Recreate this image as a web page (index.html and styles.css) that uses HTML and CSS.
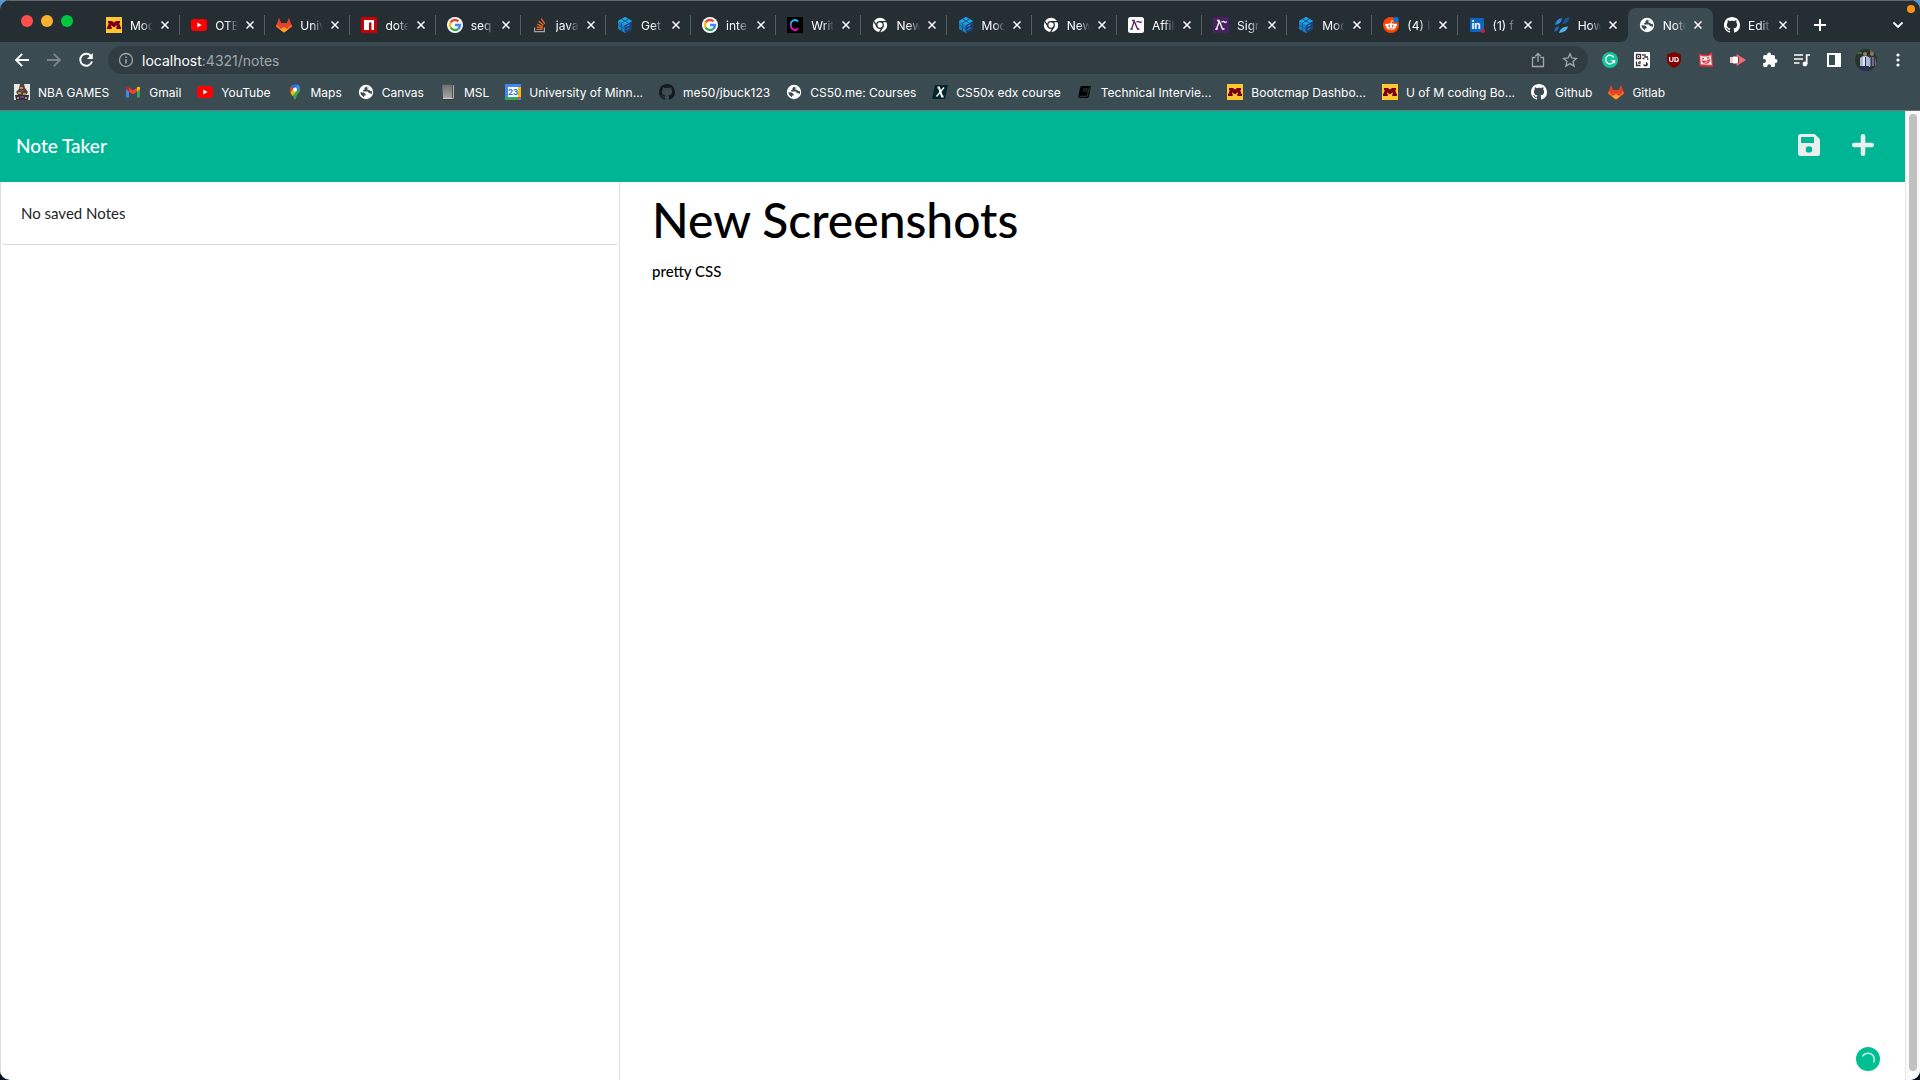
FILE: index.html
```html
<!DOCTYPE html>
<html lang="en">
<head>
<meta charset="utf-8">
<title>Note Taker</title>
<link rel="stylesheet" href="styles.css">
</head>
<body>
<svg class="sprite" aria-hidden="true">
  <symbol id="umn" viewBox="0 0 16 16"><path fill="#ffc72f" d="M0 0h16v16H0z"/><path fill="#7a0019" d="M2 4h4l2 1.500L10 4h4v2h-.8l1.200 3.800h.6V12h-4.700V9.800h.7l-.6-1.600L8.800 10H7.200L5.600 8.200 5 9.800h.7V12H1V9.800h.6L2.800 6H2z"/></symbol>
  <symbol id="youtube" viewBox="0 0 16 16"><rect y="2" width="16" height="12" rx="3" fill="#f00"/><path fill="#fff" d="M6.300 5.500v5L10.600 8z"/></symbol>
  <symbol id="gitlab" viewBox="0 0 16 16"><path fill="#e24329" d="M8 15.500 0 9.500 3 .8 5.200 6h5.600L13 .8l3 8.700z"/><path fill="#fc6d26" d="M8 15.500 0 9.500l.8-2.200L5.200 12zM8 15.500l8-6-.8-2.200L10.800 12z"/><path fill="#fca326" d="m8 15.500-4-3L8 10l4 2.500z"/></symbol>
  <symbol id="npm" viewBox="0 0 16 16"><path fill="#cb0000" d="M0 0h16v16H0z"/><path fill="#fff" d="M3 3h10v10h-2.500V5.500H8V13H3z"/></symbol>
  <symbol id="google" viewBox="0 0 16 16"><circle cx="8" cy="8" r="8" fill="#fff"/><g fill="none" stroke-width="2.400"><path stroke="#ea4335" d="M3.600 5.500A5 5 0 0 1 11.500 4.400"/><path stroke="#fbbc05" d="M3.600 5.500a5 5 0 0 0 0 5"/><path stroke="#34a853" d="M3.600 10.500a5 5 0 0 0 7.600 1.300"/><path stroke="#4285f4" d="M8 8h5a5 5 0 0 1-1.800 3.800"/></g></symbol>
  <symbol id="stack" viewBox="0 0 16 16"><path fill="none" stroke="#a5a8aa" stroke-width="1.200" d="M2.600 10.500v4.200h9.800v-4.200"/><path stroke="#f46a24" stroke-width="1.200" d="M4.500 12.400h6M4.700 9.800l5.900 1.100M5.300 7.100l5.500 2.600M6.800 4.300l4.700 3.900M9.200 1.600l3.600 5"/></symbol>
  <symbol id="sequelize" viewBox="0 0 16 16"><path fill="#1a86c9" d="m8 0 7 4v8l-7 4-7-4V4z"/><path fill="#1b3f78" d="m15 4-7 4v8l7-4z"/><path fill="#1fa3e3" d="m8 0 7 4-7 4-7-4z"/><path fill="none" stroke="#15568f" d="m4.500 2 7 4v3M11.500 2l-7 4v8M1 8l7 4M8 8v7"/><path stroke="#2b9ad9" d="m9.500 9.500 3-1.700M9.500 12.500l3-1.700"/></symbol>
  <symbol id="codecademy" viewBox="0 0 16 16"><linearGradient id="cg" x2="0" y2="1"><stop offset=".15" stop-color="#13c7f5"/><stop offset=".5" stop-color="#7a50e8"/><stop offset=".8" stop-color="#f509c0"/></linearGradient><path d="M0 0h16v16H0z"/><path fill="none" stroke="url(#cg)" stroke-width="1.800" d="M11 4.600A4 4 0 0 0 4 8a4 4 0 0 0 7 3.400"/></symbol>
  <symbol id="chrome" viewBox="0 0 16 16"><circle cx="8" cy="8" r="7.200" fill="#fff"/><g fill="none" stroke="#252f33" stroke-width="1.300"><circle cx="8" cy="8" r="3.300"/><path d="M8 4.700h7M5.200 9.700 2 4.500M10.800 9.700l-3.600 6.200"/></g></symbol>
  <symbol id="lambda" viewBox="0 0 16 16"><rect width="16" height="16" rx="2.500" fill="#fff"/><path fill="none" stroke="#4b2263" stroke-width="1.300" d="M4 3.500h2L9.500 12h2M6.200 4.500 3.500 12M2.200 12.200h2.600M8.500 5.200q1.500-1.400 3-.2t2-.6"/></symbol>
  <symbol id="lambda-dark" viewBox="0 0 16 16"><rect width="16" height="16" rx="1" fill="#4b2062"/><path fill="none" stroke="#fff" stroke-width="1.300" d="M4 3.500h2L9.500 12h2M6.200 4.500 3.500 12M2.200 12.200h2.600M8.500 5.200q1.500-1.400 3-.2t2-.6"/></symbol>
  <symbol id="reddit" viewBox="0 0 16 16"><circle cx="8" cy="8" r="8" fill="#ff4500"/><ellipse cx="8" cy="9.500" rx="4.800" ry="3.300" fill="#fff"/><circle cx="3.300" cy="8" r="1.300" fill="#fff"/><circle cx="12.700" cy="8" r="1.300" fill="#fff"/><path fill="none" stroke="#fff" stroke-width=".8" d="M8 6.500 8.700 3.600l2.500.6"/><circle cx="6.200" cy="9" r=".9" fill="#ff4500"/><circle cx="9.800" cy="9" r=".9" fill="#ff4500"/><path fill="none" stroke="#ff4500" stroke-width=".7" d="M6 11.200q2 1.200 4 0"/><circle cx="13" cy="2.800" r="2.800" fill="#0872d3"/></symbol>
  <symbol id="linkedin" viewBox="0 0 16 16"><rect x="1" y="1" width="14" height="14" rx="1" fill="#0a66c2"/><text x="2.500" y="12" fill="#fff" font-family="Lato, sans-serif" font-size="11" font-weight="900">in</text><circle cx="14" cy="14" r="2" fill="#e0182d"/></symbol>
  <symbol id="digital" viewBox="0 0 16 16"><path fill="#2d8be0" d="M8 1Q7.500 7 1 8q1-6 7-7z"/><path fill="#1c55a0" d="M15.500 0Q15 6 9 7q0-6 6.500-7z"/><path fill="#1f69b8" d="M5 9q0 4.500-4.500 6Q0 10 5 9z"/><path fill="#54b0e8" d="M14 9.500Q13 15 5 16q1-6 9-6.500z"/></symbol>
  <symbol id="globe" viewBox="0 0 16 16"><circle cx="8" cy="8" r="7.200" fill="#fff"/><path fill="#3b4b52" d="M8.500 2.300 6.500 4v1.600L5 6.300l.4 1.300h4.400l1.300 1.600h1.700l.5 1.300q1-1.500.8-3.200l-1.800-.2-1.500-1.300-1.600-.3.300-1.200 2-.3q-1.400-.7-3-.4zM2.200 8.200l3.600.4 1.900 1.500v1.300H6.300l-.4 1.900q-3-1.300-3.700-5.100z"/></symbol>
  <symbol id="github" viewBox="0 0 16 16"><path fill="currentColor" d="M8 0C3.580 0 0 3.580 0 8c0 3.540 2.290 6.530 5.470 7.590.4.070.55-.17.55-.38 0-.19-.01-.82-.01-1.490-2.010.37-2.530-.49-2.690-.94-.09-.23-.48-.94-.82-1.130-.28-.15-.68-.52-.01-.53.63-.01 1.080.58 1.230.82.72 1.210 1.870.87 2.330.66.07-.52.28-.87.51-1.070-1.780-.2-3.640-.89-3.640-3.950 0-.87.31-1.590.82-2.150-.08-.2-.36-1.020.08-2.120 0 0 .67-.21 2.200.82.64-.18 1.320-.27 2-.27s1.360.09 2 .27c1.530-1.040 2.200-.82 2.200-.82.44 1.100.16 1.920.08 2.120.51.56.82 1.270.82 2.150 0 3.070-1.870 3.750-3.650 3.950.29.25.54.73.54 1.480 0 1.070-.01 1.930-.01 2.200 0 .21.15.46.55.38A8 8 0 0 0 16 8c0-4.420-3.580-8-8-8z"/></symbol>
  <symbol id="nba" viewBox="0 0 16 16"><path fill="#e8e8e8" d="M0 0h16v16H0z"/><path fill="#51443d" d="M6 0h4l1 4 3 4-2 3H4L2 8l3-3z"/><path fill="#26324a" d="M1 11h14l-1 5H2z"/><path fill="#c98d34" d="M6 3h3v2H6zM4 8h3v2H4zM9 9h3v2H9zM3 13h2v2H3zM11 13h2v2h-2z"/><path fill="#7b3c72" d="M7 6h3v2H7zM6 12h4v2H6z"/></symbol>
  <symbol id="gmail" viewBox="0 0 16 16"><path fill="#4285f4" d="M1 4v9.500h3V6z"/><path fill="#34a853" d="M12 6v7.500h3V4z"/><path fill="#ea4335" d="M4 3.500 8 6.600l4-3.100v4L8 10.500l-4-3z"/><path fill="#c5221f" d="M1 4c0-1.500 2-1.500 3-.5v4L1 5.300z"/><path fill="#fbbc04" d="M15 4c0-1.500-2-1.500-3-.5v4l3-2.200z"/></symbol>
  <symbol id="maps" viewBox="0 0 16 16"><path fill="#34a853" d="M13.200 4c1.100 4-3.600 5.800-4.500 11-.2 1-1.200 1-1.400 0-.4-1.600-1-3-2-4.200z"/><path fill="#fbbc04" d="m3.400 8 3-3.500L10 7l-4.700 5Q4 10 3.400 8z"/><path fill="#4285f4" d="m6.500 4.500 3.800-4q2.100.8 2.900 3L10 7z"/><path fill="#ea4335" d="M3.900 2.200 6.600 4.500 3.400 8Q2 5 3.900 2.200z"/><path fill="#1a73e8" d="M3.900 2.200Q6-.7 10.300.5L6.600 4.500z"/><circle cx="8" cy="5.500" r="2" fill="#fff"/></symbol>
  <symbol id="msl" viewBox="0 0 16 16"><linearGradient id="mg" x2="0" y2="1"><stop stop-color="#6e6e6e"/><stop offset="1" stop-color="#a4a4a4"/></linearGradient><path fill="#2e2e2e" d="M1.500.5H14v15H3z"/><path fill="url(#mg)" d="M2 .5h10V14H3z"/><path fill="#ccc" d="M12.800 1h1v14l-1-1zM3 14h9.500l1 1H3z"/></symbol>
  <symbol id="calendar" viewBox="0 0 16 16"><path fill="#4285f4" d="M0 0h16v16H0z"/><path fill="#fbbc04" d="M13 3h3v10h-3z"/><path fill="#34a853" d="M0 13h13v3H0z"/><path fill="#ea4335" d="M13 13h3l-3 3z"/><path fill="#fff" d="M3 3h10v10H3z"/><text x="8" y="10.800" text-anchor="middle" fill="#1a73e8" font-family="Inter, sans-serif" font-size="8" font-weight="700">23</text></symbol>
  <symbol id="edx" viewBox="0 0 16 16"><path fill="#03262b" d="M3 1h13l-3 14H0z"/><path fill="none" stroke="#fff" stroke-width="2" d="M5.500 3.500h1.500L10 12.500h1.500"/><path stroke="#fff" stroke-width="1.300" d="m12 3.500-7.500 9"/></symbol>
  <symbol id="book" viewBox="0 0 16 16"><path d="M5 2h8q1 0 .7 1.200L12 12q-.3 2-2 2H3q-2 0-1.500-2L3 4q.5-2 2-2z"/><path fill="none" stroke="#4f5a5e" stroke-width=".7" d="M6 5h5M5.600 7h5M3 12.300h7l2.600-9"/></symbol>
  <symbol id="back" viewBox="0 0 16 16"><path fill="none" stroke="currentColor" stroke-width="1.800" d="M15 8H2.500M8.200 1.800 2 8l6.200 6.200"/></symbol>
  <symbol id="reload" viewBox="0 0 16 16"><path fill="none" stroke="currentColor" stroke-width="1.900" d="M13.200 4.300A6 6 0 1 0 14 9.500"/><path fill="currentColor" d="M14.800 1v6H8.900z"/></symbol>
  <symbol id="info" viewBox="0 0 16 16"><circle cx="8" cy="8" r="6.500" fill="none" stroke="currentColor" stroke-width="1.300"/><path stroke="currentColor" stroke-width="1.600" d="M8 7.200v4.200M8 4.500v1.600"/></symbol>
  <symbol id="share" viewBox="0 0 16 16"><path fill="none" stroke="currentColor" stroke-width="1.300" d="M5.500 5.500h-3v9h11v-9h-3M8 10V1.500M5.300 4.200 8 1.500l2.700 2.700"/></symbol>
  <symbol id="star" viewBox="0 0 16 16"><path fill="none" stroke="currentColor" stroke-width="1.300" d="m8 1.800 1.800 4.200 4.700.4L11 9.500l1.100 4.600L8 11.600l-4.100 2.500L5 9.500 1.500 6.400 6.200 6z"/></symbol>
  <symbol id="grammarly" viewBox="0 0 16 16"><circle cx="8" cy="8" r="8" fill="#15c39a"/><path fill="none" stroke="#fff" stroke-width="1.300" d="M11.700 5.400A4.300 4.300 0 1 0 12 9M9.300 8.700h3.200v2.600"/></symbol>
  <symbol id="qr" viewBox="0 0 16 16"><rect width="16" height="16" rx="1" fill="#fff"/><g fill="none" stroke="#333" stroke-width="1.300"><path d="M2.500 2.500h4v4h-4zM2.500 9.500v4h4M4 11h2V9M9 2v2M11 2v3h3M8.500 6.500h2M13 7h1.500"/></g><path fill="#333" d="M4 4h1v1H4zM9 12.500a2.600 2.600 0 0 0 5 0q0-1.500-2-3v3z"/></symbol>
  <symbol id="ublock" viewBox="0 0 16 16"><path fill="#800000" d="m8 0 7 2.500v5c0 4-3 6.500-7 8.500-4-2-7-4.500-7-8.500v-5z"/><path fill="none" stroke="#fff" stroke-width="1.200" d="M3.600 5v3q0 1.500 1.700 1.500T7 8V5M9 5.500v4h1.300a2 2 0 0 0 0-4z"/></symbol>
  <symbol id="mask" viewBox="0 0 16 16"><path fill="#e62d3a" d="m1 1.500 4.500 1.300 5-.2L14 0l1 15-13.500-.8z"/><path fill="#f8ebeb" d="m2.300 3.500 3.200 1 5.200-.2L13 2.800l.7 10.200-11-.8z"/><path fill="none" stroke="#d8323d" stroke-width="1.200" d="m4 7 2-.6M9 6.200l2.500-.6M4.500 9q3.500 1 7-1-.5 3-3 3.200-2.800.3-4-2.200z"/></symbol>
  <symbol id="clip" viewBox="0 0 16 16"><path fill="#ffc9ca" d="M0 5h4v6H0z"/><path fill="#fff" d="M3 4.500h5v7H3z"/><path fill="#ff6670" d="M6.500 2 16 8l-9.500 6v-3H9V5H6.500z"/></symbol>
  <symbol id="puzzle" viewBox="0 0 16 16"><path fill="currentColor" d="M13.500 7H13V4.500Q13 3 11.500 3H9v-.7a1.900 1.900 0 0 0-3.800 0V3H2.700Q1.200 3 1.200 4.500v2.400H2a2 2 0 0 1 0 4h-.8v2.600q0 1.500 1.500 1.500h2.500v-.8a2 2 0 0 1 4 0v.8h2.300q1.500 0 1.500-1.500v-2.600h.5a1.950 1.950 0 0 0 0-3.900z"/></symbol>
  <symbol id="queue" viewBox="0 0 16 16"><path fill="none" stroke="currentColor" stroke-width="1.700" d="M0 3h9M0 7h9M0 11h5.500M12.700 12V3H16"/><circle cx="11" cy="12" r="2.400" fill="currentColor"/></symbol>
  <symbol id="panel" viewBox="0 0 16 16"><path fill="currentColor" d="M1 1h14v14H1zm2 2v10h6V3z" fill-rule="evenodd"/></symbol>
  <symbol id="avatar" viewBox="0 0 22 22"><clipPath id="ac"><circle cx="11" cy="11" r="11"/></clipPath><g clip-path="url(#ac)"><path fill="#26342b" d="M0 0h22v22H0z"/><path fill="#4e6b45" d="M2 3h5v2H2zM15 1h4v3h-4z"/><path fill="#a9b9d4" d="m5 9 3-2h4l3 2v9H5z"/><path fill="#e3e9f1" d="M8 8h3v9H8z"/><path fill="#243151" d="M10 8h1v9h-1zM5 17h9v5H5z"/><path fill="#7c6583" d="M15 8h5l2 9h-7z"/><path fill="#313b58" d="M16 8h1v10h-1zM19 8h1v10h-1z"/><circle cx="10" cy="5" r="2" fill="#9f7764"/><circle cx="17" cy="5" r="2" fill="#9a715c"/></g></symbol>
  <symbol id="menu" viewBox="0 0 16 16"><g fill="currentColor"><circle cx="8" cy="3" r="1.600"/><circle cx="8" cy="8" r="1.600"/><circle cx="8" cy="13" r="1.600"/></g></symbol>
  <symbol id="close" viewBox="0 0 8 8"><path stroke="currentColor" stroke-width="1.500" d="m.5.5 7 7m0-7-7 7"/></symbol>
  <symbol id="add" viewBox="0 0 12 12"><path stroke="currentColor" stroke-width="2" d="M6 0v12M0 6h12"/></symbol>
  <symbol id="chevron" viewBox="0 0 12 12"><path fill="none" stroke="currentColor" stroke-width="1.800" d="m1.500 3.500 4.500 4.500 4.500-4.500"/></symbol>
</svg>

<div class="window">
  <header class="browser">
    <div class="tab-strip">
      <div class="lights"><span class="light red"></span><span class="light amber"></span><span class="light green"></span></div>
      <nav class="tabs" aria-label="Open tabs">
        <div class="tab"><svg class="icon"><use href="#umn"/></svg><a class="tab-title" href="#">Mod</a><button class="close" aria-label="Close tab"><svg><use href="#close"/></svg></button></div>
        <div class="tab"><svg class="icon"><use href="#youtube"/></svg><a class="tab-title" href="#">OTB</a><button class="close" aria-label="Close tab"><svg><use href="#close"/></svg></button></div>
        <div class="tab"><svg class="icon"><use href="#gitlab"/></svg><a class="tab-title" href="#">Univ</a><button class="close" aria-label="Close tab"><svg><use href="#close"/></svg></button></div>
        <div class="tab"><svg class="icon"><use href="#npm"/></svg><a class="tab-title" href="#">dote</a><button class="close" aria-label="Close tab"><svg><use href="#close"/></svg></button></div>
        <div class="tab"><svg class="icon"><use href="#google"/></svg><a class="tab-title" href="#">seq</a><button class="close" aria-label="Close tab"><svg><use href="#close"/></svg></button></div>
        <div class="tab"><svg class="icon"><use href="#stack"/></svg><a class="tab-title" href="#">java</a><button class="close" aria-label="Close tab"><svg><use href="#close"/></svg></button></div>
        <div class="tab"><svg class="icon"><use href="#sequelize"/></svg><a class="tab-title" href="#">Get</a><button class="close" aria-label="Close tab"><svg><use href="#close"/></svg></button></div>
        <div class="tab"><svg class="icon"><use href="#google"/></svg><a class="tab-title" href="#">inte</a><button class="close" aria-label="Close tab"><svg><use href="#close"/></svg></button></div>
        <div class="tab"><svg class="icon"><use href="#codecademy"/></svg><a class="tab-title" href="#">Writ</a><button class="close" aria-label="Close tab"><svg><use href="#close"/></svg></button></div>
        <div class="tab"><svg class="icon"><use href="#chrome"/></svg><a class="tab-title" href="#">New</a><button class="close" aria-label="Close tab"><svg><use href="#close"/></svg></button></div>
        <div class="tab"><svg class="icon"><use href="#sequelize"/></svg><a class="tab-title" href="#">Mod</a><button class="close" aria-label="Close tab"><svg><use href="#close"/></svg></button></div>
        <div class="tab"><svg class="icon"><use href="#chrome"/></svg><a class="tab-title" href="#">New</a><button class="close" aria-label="Close tab"><svg><use href="#close"/></svg></button></div>
        <div class="tab"><svg class="icon"><use href="#lambda"/></svg><a class="tab-title" href="#">Affil</a><button class="close" aria-label="Close tab"><svg><use href="#close"/></svg></button></div>
        <div class="tab"><svg class="icon"><use href="#lambda-dark"/></svg><a class="tab-title" href="#">Sign</a><button class="close" aria-label="Close tab"><svg><use href="#close"/></svg></button></div>
        <div class="tab"><svg class="icon"><use href="#sequelize"/></svg><a class="tab-title" href="#">Mod</a><button class="close" aria-label="Close tab"><svg><use href="#close"/></svg></button></div>
        <div class="tab"><svg class="icon"><use href="#reddit"/></svg><a class="tab-title" href="#">(4) I</a><button class="close" aria-label="Close tab"><svg><use href="#close"/></svg></button></div>
        <div class="tab"><svg class="icon"><use href="#linkedin"/></svg><a class="tab-title" href="#">(1) f</a><button class="close" aria-label="Close tab"><svg><use href="#close"/></svg></button></div>
        <div class="tab before-active"><svg class="icon"><use href="#digital"/></svg><a class="tab-title" href="#">How</a><button class="close" aria-label="Close tab"><svg><use href="#close"/></svg></button></div>
        <div class="tab active"><svg class="icon"><use href="#globe"/></svg><a class="tab-title" href="#">Note</a><button class="close" aria-label="Close tab"><svg><use href="#close"/></svg></button></div>
        <div class="tab"><svg class="icon"><use href="#github"/></svg><a class="tab-title" href="#">Edit</a><button class="close" aria-label="Close tab"><svg><use href="#close"/></svg></button></div>
      </nav>
      <div class="strip-end">
        <button class="strip-button" aria-label="New tab"><svg><use href="#add"/></svg></button>
        <button class="strip-button" aria-label="Search tabs"><svg><use href="#chevron"/></svg></button>
      </div>
      <span class="recording"></span>
    </div>

    <div class="toolbar">
      <div class="tools">
        <button class="tool" aria-label="Back"><svg class="icon"><use href="#back"/></svg></button>
        <button class="tool forward" aria-label="Forward" disabled><svg class="icon"><use href="#back"/></svg></button>
        <button class="tool" aria-label="Reload"><svg class="icon"><use href="#reload"/></svg></button>
      </div>
      <div class="omnibox">
        <svg class="icon"><use href="#info"/></svg>
        <a class="address" href="#"><span class="host">localhost</span>:4321/notes</a>
        <button class="tool" aria-label="Share"><svg class="icon"><use href="#share"/></svg></button>
        <button class="tool" aria-label="Bookmark this page"><svg class="icon"><use href="#star"/></svg></button>
      </div>
      <div class="tools">
        <button class="tool" aria-label="Grammarly"><svg class="icon"><use href="#grammarly"/></svg></button>
        <button class="tool" aria-label="QR code"><svg class="icon"><use href="#qr"/></svg></button>
        <button class="tool" aria-label="uBlock"><svg class="icon"><use href="#ublock"/></svg></button>
        <button class="tool" aria-label="Mask"><svg class="icon"><use href="#mask"/></svg></button>
        <button class="tool" aria-label="Recorder"><svg class="icon"><use href="#clip"/></svg></button>
        <button class="tool" aria-label="Extensions"><svg class="icon"><use href="#puzzle"/></svg></button>
        <button class="tool" aria-label="Media"><svg class="icon"><use href="#queue"/></svg></button>
        <button class="tool" aria-label="Side panel"><svg class="icon"><use href="#panel"/></svg></button>
        <button class="tool" aria-label="Profile"><svg class="avatar"><use href="#avatar"/></svg></button>
        <button class="tool" aria-label="Menu"><svg class="icon"><use href="#menu"/></svg></button>
      </div>
    </div>

    <nav class="bookmarks" aria-label="Bookmarks">
      <a href="#"><svg class="icon"><use href="#nba"/></svg>NBA GAMES</a>
      <a href="#"><svg class="icon"><use href="#gmail"/></svg>Gmail</a>
      <a href="#"><svg class="icon"><use href="#youtube"/></svg>YouTube</a>
      <a href="#"><svg class="icon"><use href="#maps"/></svg>Maps</a>
      <a href="#"><svg class="icon"><use href="#globe"/></svg>Canvas</a>
      <a href="#"><svg class="icon"><use href="#msl"/></svg>MSL</a>
      <a href="#"><svg class="icon"><use href="#calendar"/></svg>University of Minn...</a>
      <a href="#"><svg class="icon dark"><use href="#github"/></svg>me50/jbuck123</a>
      <a href="#"><svg class="icon"><use href="#globe"/></svg>CS50.me: Courses</a>
      <a href="#"><svg class="icon"><use href="#edx"/></svg>CS50x edx course</a>
      <a href="#"><svg class="icon"><use href="#book"/></svg>Technical Intervie...</a>
      <a href="#"><svg class="icon"><use href="#umn"/></svg>Bootcmap Dashbo...</a>
      <a href="#"><svg class="icon"><use href="#umn"/></svg>U of M coding Bo...</a>
      <a href="#"><svg class="icon"><use href="#github"/></svg>Github</a>
      <a href="#"><svg class="icon"><use href="#gitlab"/></svg>Gitlab</a>
    </nav>
  </header>

  <div class="viewport">
    <div class="page">
      <nav class="navbar">
        <a class="brand" href="#">Note Taker</a>
        <div class="actions">
          <button class="action" aria-label="Save note"><svg viewBox="0 0 22 22"><path fill="currentColor" fill-rule="evenodd" d="M2.500 0h13.300q1 0 1.700.7l3.800 3.800q.7.700.7 1.700v13.300q0 2.500-2.500 2.500h-17Q0 22 0 19.500v-17Q0 0 2.500 0zM3 3v6h13V3zm8 9.200a3.200 3.200 0 1 0 0 6.400 3.200 3.200 0 0 0 0-6.400z"/></svg></button>
          <button class="action" aria-label="New note"><svg viewBox="0 0 22 22"><path stroke="currentColor" stroke-width="4.600" stroke-linecap="round" d="M11 2.300v17.400M2.300 11h17.400"/></svg></button>
        </div>
      </nav>
      <main class="content">
        <aside class="sidebar"><ul class="notes"><li class="note">No saved Notes</li></ul></aside>
        <section class="editor">
          <input class="note-title" type="text" aria-label="Note title" value="New Screenshots">
          <textarea class="note-text" aria-label="Note text" spellcheck="false">pretty CSS</textarea>
        </section>
      </main>
      <svg class="checker" viewBox="0 0 24 24"><circle cx="12" cy="12" r="12" fill="#00bf93"/><path fill="none" stroke="#d8f7ed" stroke-width="1.400" d="M6.500 9.500A6.300 6.300 0 0 1 17.600 15.500"/></svg>
    </div>
    <div class="scrollbar"><div class="thumb"></div></div>
  </div>
</div>
</body>
</html>
```
FILE: styles.css
```css
* {
  box-sizing: border-box;
}

body {
  margin: 0;
  background: linear-gradient(#5b96d0 20px, #04121f 20px);
}

button {
  padding: 0;
  border: 0;
  background: none;
  color: inherit;
}

a {
  color: inherit;
  text-decoration: none;
}

.sprite {
  position: absolute;
  width: 0;
  height: 0;
}

.icon {
  width: 16px;
  height: 16px;
  flex: none;
  display: block;
}

.dark {
  color: #15191b;
}

.window {
  height: 100vh;
  display: flex;
  flex-direction: column;
  border-radius: 10px;
  overflow: hidden;
}

/* Browser chrome */

.browser {
  flex: none;
  background: #3b4b52;
  border-bottom: 1px solid #6c767b;
  color: #fff;
  font-family: Inter, "Liberation Sans", sans-serif;
  font-size: 12px;
}

.tab-strip {
  position: relative;
  display: flex;
  height: 42px;
  background: #252f33;
  border-top: 1px solid #626c70;
}

.lights {
  display: flex;
  flex: none;
  width: 95px;
  align-items: center;
  gap: 8px;
  padding: 0 0 2px 21px;
}

.light {
  width: 12px;
  height: 12px;
  border-radius: 50%;
}

.red {
  background: #ff4e4e;
}

.amber {
  background: #ffb02e;
}

.green {
  background: #00c73c;
}

.tabs {
  display: flex;
  flex: 1;
  min-width: 0;
  margin-top: 7px;
}

.tab {
  position: relative;
  display: flex;
  flex: 1;
  min-width: 0;
  align-items: center;
  gap: 8px;
  padding: 0 11px;
}

.tab::after {
  content: "";
  position: absolute;
  right: 0;
  top: 7px;
  width: 1px;
  height: 20px;
  background: #566064;
}

.tab-title {
  flex: 1;
  min-width: 0;
  overflow: hidden;
  white-space: nowrap;
  mask-image: linear-gradient(to right, #000 50%, transparent);
}

.close {
  flex: none;
  width: 8px;
  height: 8px;
}

.close svg {
  display: block;
  width: 8px;
  height: 8px;
}

.active {
  background: #3b4b52;
  border-radius: 8px 8px 0 0;
}

.before-active::after {
  display: none;
}

.active::before,
.active::after {
  content: "";
  position: absolute;
  top: auto;
  bottom: 0;
  width: 8px;
  height: 8px;
}

.active::before {
  left: -8px;
  background: radial-gradient(circle at 0 0, transparent 8px, #3b4b52 8px);
}

.active::after {
  right: -8px;
  background: radial-gradient(circle at 100% 0, transparent 8px, #3b4b52 8px);
}

.strip-end {
  display: flex;
  flex: none;
  width: 122px;
  justify-content: space-between;
  align-items: center;
  margin-top: 7px;
  padding: 0 16px;
}

.strip-button svg {
  display: block;
  width: 12px;
  height: 12px;
}

.recording {
  position: absolute;
  top: 4px;
  right: 5px;
  width: 8px;
  height: 8px;
  border-radius: 50%;
  background: #ff9412;
}

.toolbar {
  display: flex;
  align-items: center;
  gap: 6px;
  padding: 4px 6px;
}

.tools {
  display: flex;
}

.tool {
  display: flex;
  width: 32px;
  height: 28px;
  align-items: center;
  justify-content: center;
}

.forward {
  color: #7c878c;
  transform: rotate(180deg);
}

.avatar {
  width: 22px;
  height: 22px;
}

.omnibox {
  display: flex;
  flex: 1;
  height: 28px;
  align-items: center;
  padding: 0 2px 0 10px;
  border-radius: 14px;
  background: #303c42;
  color: #9fa7ab;
}

.address {
  flex: 1;
  padding-left: 8px;
  font-size: 14px;
}

.host {
  color: #fff;
}

.bookmarks {
  display: flex;
  gap: 16px;
  padding: 3px 14px 7px;
  white-space: nowrap;
}

.bookmarks a {
  display: flex;
  align-items: center;
  gap: 8px;
  height: 22px;
}

/* Notes page */

.viewport {
  display: flex;
  flex: 1;
  min-height: 0;
  background: #fff;
  font-family: Lato, "Liberation Sans", sans-serif;
  font-size: 15px;
  color: #212529;
}

.page {
  position: relative;
  display: flex;
  flex: 1;
  flex-direction: column;
}

.navbar {
  display: flex;
  align-items: center;
  justify-content: space-between;
  height: 71px;
  padding: 0 31px 3px 16px;
  background: #00b594;
  color: #fff;
}

.brand {
  font-size: 19px;
  font-weight: 500;
}

.actions {
  display: flex;
  gap: 32px;
  color: #e8efed;
}

.action svg {
  display: block;
  width: 22px;
  height: 22px;
}

.content {
  display: flex;
  flex: 1;
}

.sidebar {
  width: calc(100% / 3 - 15px);
  padding: 0 1px;
  border: solid #dcdcdc;
  border-width: 0 1px;
}

.notes {
  margin: 0;
  padding: 0;
  list-style: none;
}

.note {
  padding: 20px 19px;
  line-height: 22px;
  border-bottom: 1px solid #d6d6d6;
  border-radius: 0 0 4px 4px;
}

.editor {
  display: flex;
  flex: 1;
  flex-direction: column;
  padding: 7px 32px;
}

.note-title,
.note-text {
  width: 100%;
  padding: 0;
  border: 0;
  outline: 0;
  background: none;
  color: #000;
  font-family: inherit;
  font-weight: 500;
}

.note-title {
  height: 60px;
  font-size: 48px;
}

.note-text {
  flex: 1;
  margin-top: 10px;
  font-size: 15px;
  line-height: 24px;
  resize: none;
}

.checker {
  position: absolute;
  right: 25px;
  bottom: 9px;
  width: 24px;
  height: 24px;
}

.scrollbar {
  flex: none;
  width: 15px;
  padding: 3px 3px 9px;
  background: #fafafa;
  border-left: 1px solid #e6e6e6;
}

.thumb {
  width: 8px;
  height: 100%;
  border-radius: 4px;
  background: #c1c1c1;
}
```
